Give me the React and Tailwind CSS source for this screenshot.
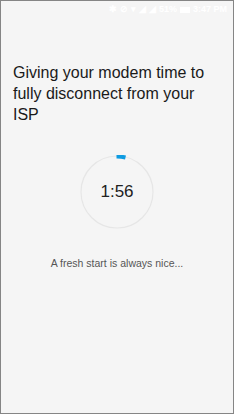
import React from "react";

const StatusBar = () => (
  <div className="flex h-[18px] items-center justify-end gap-[3px] pr-[6px] text-[9px] font-bold text-white" style={{ fontFamily: "'Liberation Sans', sans-serif" }}>
    <span>✱</span>
    <span>⊘</span>
    <span>▾</span>
    <span>◢</span>
    <span>◢</span>
    <span>51%</span>
    <span className="inline-block h-[6px] w-[10px] bg-white"></span>
    <span>3:47 PM</span>
  </div>
);

const Countdown = ({ label }) => (
  <div className="relative h-[74px] w-[74px]">
    <svg width="74" height="74" viewBox="0 0 74 74" className="absolute inset-0">
      <circle cx="37" cy="37" r="36" fill="none" stroke="#e6e6e6" strokeWidth="1.2" />
      <path d="M36.5 1.5 A35.5 35.5 0 0 1 45.5 2.5" fill="none" stroke="#0e9be1" strokeWidth="4" />
    </svg>
    <div className="absolute inset-0 flex items-center justify-center text-[17px] text-[#222]">{label}</div>
  </div>
);

export default function App() {
  return (
    <div
      className="flex h-[414px] w-[234px] flex-col border border-[#858585] bg-[#f5f5f5]"
      style={{ fontFamily: "'Liberation Sans', sans-serif" }}
    >
      <StatusBar />
      <h1 className="mt-[43px] px-[12px] text-[16px] leading-[21px] font-normal text-[#1a1a1a]">
        Giving your modem time to fully disconnect from your ISP
      </h1>
      <div className="mt-[30px] flex justify-center">
        <Countdown label="1:56" />
      </div>
      <p className="mt-[27px] text-center text-[10.5px] text-[#555]">A fresh start is always nice...</p>
    </div>
  );
}
